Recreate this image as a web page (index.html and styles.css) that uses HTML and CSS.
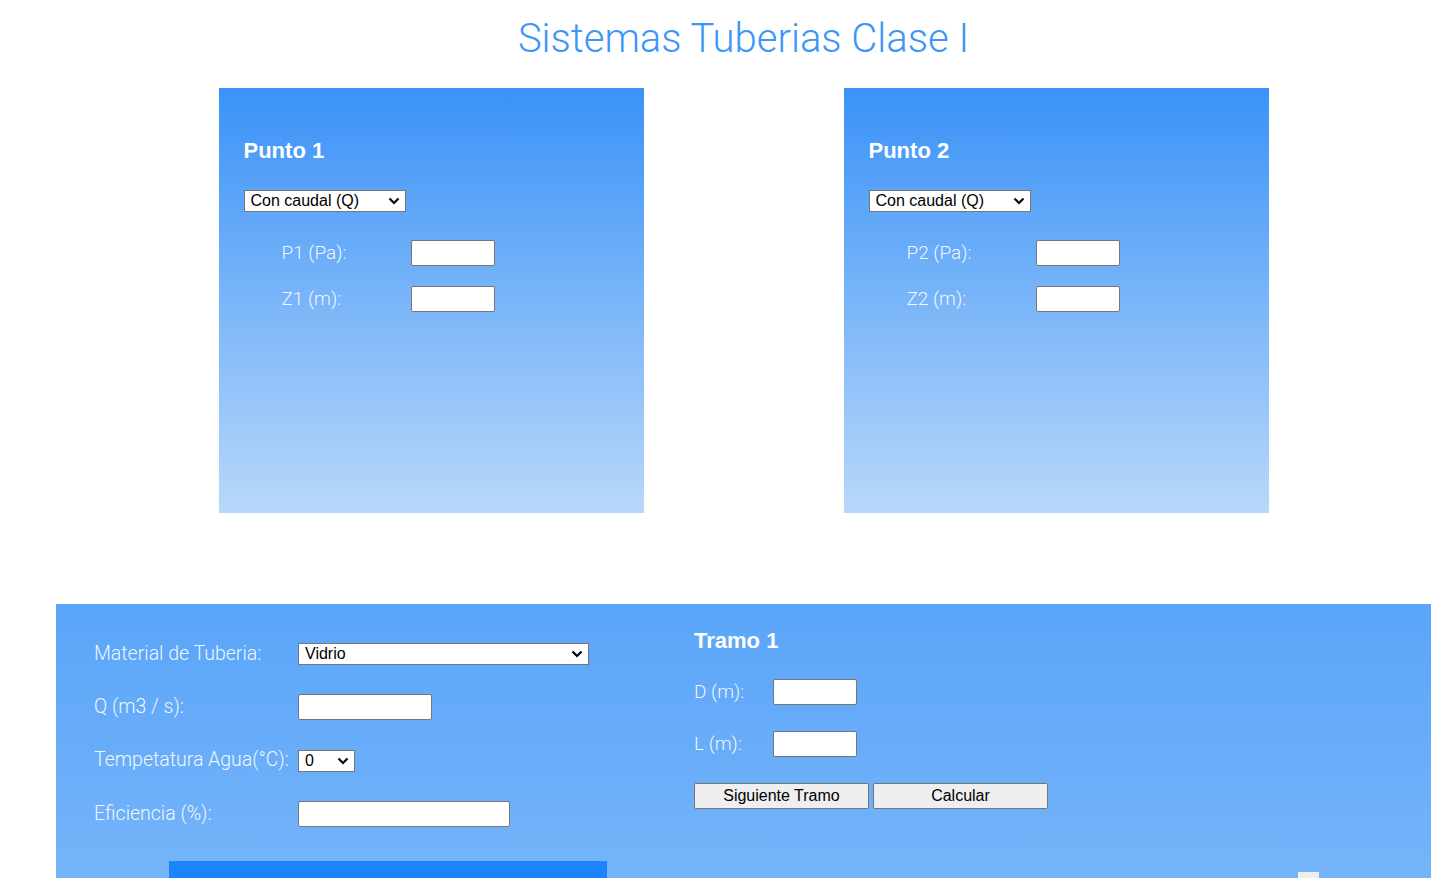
FILE: index.html
```html
<!DOCTYPE html>
<html lang="es">
<head>
<meta charset="utf-8">
<title>Sistemas Tuberias Clase I</title>
<link rel="stylesheet" href="styles.css">
</head>
<body>
<div class="page">
  <h1 class="title">Sistemas Tuberias Clase I</h1>

  <div class="points">
    <section class="point">
      <h2 class="point-title">Punto 1</h2>
      <select class="sel sel-mode">
        <option>Con caudal (Q)</option>
      </select>
      <div class="point-rows">
        <div class="prow"><label class="lbl plbl">P1 (Pa):</label><input class="in in-sm" type="text"></div>
        <div class="prow"><label class="lbl plbl">Z1 (m):</label><input class="in in-sm" type="text"></div>
      </div>
    </section>
    <section class="point">
      <h2 class="point-title">Punto 2</h2>
      <select class="sel sel-mode">
        <option>Con caudal (Q)</option>
      </select>
      <div class="point-rows">
        <div class="prow"><label class="lbl plbl">P2 (Pa):</label><input class="in in-sm" type="text"></div>
        <div class="prow"><label class="lbl plbl">Z2 (m):</label><input class="in in-sm" type="text"></div>
      </div>
    </section>
  </div>

  <section class="pipe">
    <div class="pipe-main">
      <div class="pipe-left">
        <div class="brow"><label class="lbl blbl">Material de Tuberia:</label><select class="sel sel-mat"><option>Vidrio</option></select></div>
        <div class="brow"><label class="lbl blbl">Q (m3 / s):</label><input class="in in-q" type="text"></div>
        <div class="brow"><label class="lbl blbl">Tempetatura Agua(°C):</label><select class="sel sel-temp"><option>0</option></select></div>
        <div class="brow"><label class="lbl blbl">Eficiencia (%):</label><input class="in in-ef" type="text"></div>
      </div>
      <div class="pipe-right">
        <h2 class="tramo-title">Tramo 1</h2>
        <div class="trow"><label class="lbl tlbl">D (m):</label><input class="in in-sm" type="text"></div>
        <div class="trow"><label class="lbl tlbl">L (m):</label><input class="in in-sm" type="text"></div>
        <div class="btns"><button class="btn">Siguiente Tramo</button><button class="btn">Calcular</button></div>
      </div>
    </div>
    <div class="pipe-foot">
      <div class="bar"></div>
      <button class="mini"></button>
    </div>
  </section>
</div>
</body>
</html>
```

FILE: styles.css
```css
html, body {
  margin: 0;
  padding: 0;
  background: #ffffff;
  overflow: hidden;
}
.page {
  width: 1452px;
  box-sizing: border-box;
  padding-left: 35px;
  font-family: "Liberation Sans", Arial, sans-serif;
}
.title {
  margin: 14px 0 0 0;
  text-align: center;
  font-family: Roboto, "Liberation Sans", sans-serif;
  font-weight: 300;
  font-size: 40px;
  line-height: 50px;
  color: #3d95f8;
}
.points {
  display: flex;
  justify-content: center;
  gap: 200px;
  margin-top: 24px;
}
.point {
  width: 425px;
  height: 425px;
  box-sizing: border-box;
  padding: 50px 0 0 25px;
  background: linear-gradient(#3a92f8, #b8d8f9);
}
.point-title {
  margin: 0;
  font-family: "Liberation Sans", Arial, sans-serif;
  font-weight: 700;
  font-size: 22px;
  line-height: 25px;
  color: #ffffff;
}
.sel {
  -webkit-appearance: none;
  appearance: none;
  font-family: "Liberation Sans", Arial, sans-serif;
  font-size: 16px;
  color: #000;
  background-color: #fff;
  background-image: url("data:image/svg+xml,%3Csvg xmlns='http://www.w3.org/2000/svg' width='12' height='8' viewBox='0 0 12 8'%3E%3Cpath d='M1.5 1.5 L6 6 L10.5 1.5' fill='none' stroke='%23000' stroke-width='2.2'/%3E%3C/svg%3E");
  background-repeat: no-repeat;
  background-position: right 5px center;
  background-size: 12px 8px;
  border: 1px solid #767676;
  border-radius: 0;
  box-sizing: border-box;
  padding: 0 0 0 6px;
  line-height: 20px;
}
.sel-mode {
  display: block;
  margin-top: 27px;
  width: 162px;
  height: 22px;
}
.point-rows {
  margin-top: 28px;
  padding-left: 38px;
  display: flex;
  flex-direction: column;
  gap: 20px;
}
.prow, .brow, .trow {
  display: flex;
  align-items: center;
  height: 26px;
}
.lbl {
  font-family: Roboto, "Liberation Sans", sans-serif;
  font-weight: 300;
  font-size: 19px;
  color: rgba(255, 255, 255, 0.92);
  margin-top: -2px;
}
.plbl { width: 129px; }
.blbl { width: 204px; font-size: 19.5px; }
.tlbl { width: 79px; }
.in {
  box-sizing: border-box;
  height: 26px;
  border: 1px solid #767676;
  border-radius: 2px;
  background: #fff;
  padding: 0 2px;
  font-family: "Liberation Sans", Arial, sans-serif;
  font-size: 16px;
}
.in-sm { width: 84px; }
.in-q { width: 134px; }
.in-ef { width: 212px; }
.sel-mat { width: 291px; height: 22px; }
.sel-temp { width: 57px; height: 22px; }

.pipe {
  margin: 91px 0 0 21px;
  width: 1375px;
  height: 500px;
  box-sizing: border-box;
  background: linear-gradient(#5aa5f9, #8cc0f9);
}
.pipe-main {
  display: flex;
  padding-left: 38px;
}
.pipe-left {
  width: 600px;
  padding-top: 37px;
  display: flex;
  flex-direction: column;
  gap: 27.4px;
}
.pipe-right {
  padding-top: 24px;
  display: flex;
  flex-direction: column;
}
.tramo-title {
  margin: 0;
  font-family: "Liberation Sans", Arial, sans-serif;
  font-weight: 700;
  font-size: 22px;
  line-height: 26px;
  color: #ffffff;
}
.trow { margin-top: 25px; }
.trow + .trow { margin-top: 26px; }
.btns {
  margin-top: 26px;
  display: flex;
  gap: 4px;
}
.btn {
  width: 175px;
  height: 26px;
  box-sizing: border-box;
  background: #efefef;
  border: 1px solid #767676;
  border-radius: 2px;
  font-family: "Liberation Sans", Arial, sans-serif;
  font-size: 16px;
  color: #000;
  padding: 0;
}
.pipe-foot {
  display: flex;
  align-items: flex-start;
  margin-top: 34px;
}
.bar {
  margin-left: 113px;
  width: 438px;
  height: 60px;
  background: #1c84fa;
}
.mini {
  margin-left: 691px;
  margin-top: 11px;
  width: 21px;
  height: 40px;
  background: #efefef;
  border: none;
  padding: 0;
}
```
